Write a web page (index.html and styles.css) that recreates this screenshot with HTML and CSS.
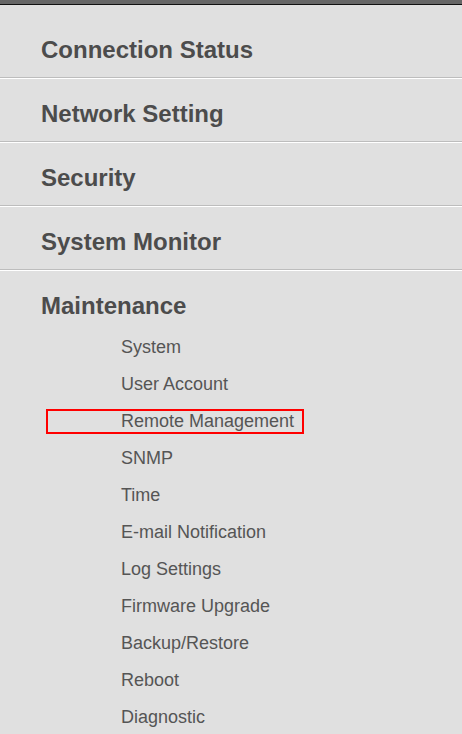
FILE: index.html
```html
<!DOCTYPE html>
<html lang="en">
<head>
  <meta charset="UTF-8" />
  <meta name="viewport" content="width=device-width, initial-scale=1.0"/>
  <title>Menu</title>
  <link rel="stylesheet" href="styles.css">
</head>
<body>

  <div class="topbar"></div>

  <ul class="menu">
    <li class="menu-item"><a class="menu-title" href="#">Connection Status</a></li>
    <li class="menu-item"><a class="menu-title" href="#">Network Setting</a></li>
    <li class="menu-item"><a class="menu-title" href="#">Security</a></li>
    <li class="menu-item"><a class="menu-title" href="#">System Monitor</a></li>
    <li class="menu-item open">
      <a class="menu-title" href="#">Maintenance</a>
      <ul class="submenu">
        <li><a href="#">System</a></li>
        <li><a href="#">User Account</a></li>
        <li><a class="selected" href="#">Remote Management</a></li>
        <li><a href="#">SNMP</a></li>
        <li><a href="#">Time</a></li>
        <li><a href="#">E-mail Notification</a></li>
        <li><a href="#">Log Settings</a></li>
        <li><a href="#">Firmware Upgrade</a></li>
        <li><a href="#">Backup/Restore</a></li>
        <li><a href="#">Reboot</a></li>
        <li><a href="#">Diagnostic</a></li>
      </ul>
    </li>
  </ul>

</body>
</html>
```

FILE: styles.css
```css
body {
  margin: 0;
  font-family: "Liberation Sans", Arial, sans-serif;
  background-color: #e0e0e0;
  overflow: hidden;
}

a {
  text-decoration: none;
}

.topbar {
  height: 4px;
  background: #666666;
  border-bottom: 1px solid #111111;
}

.menu {
  list-style: none;
  margin: 0;
  padding: 10px 0 0 0;
}

.menu-item {
  border-bottom: 1px solid #bdbdbd;
  box-shadow: 0 1px 0 #ffffff;
  margin-bottom: 1px;
}

.menu-item.open {
  border-bottom: none;
  box-shadow: none;
}

.menu-title {
  display: block;
  padding: 20px 0 12px 41px;
  font-size: 24px;
  line-height: 30px;
  font-weight: bold;
  color: #4c4c4c;
}

.open .menu-title {
  padding-bottom: 0;
}

.submenu {
  list-style: none;
  margin: 8px 0 0 0;
  padding: 0;
}

.submenu li {
  height: 37px;
  display: flex;
  align-items: center;
  padding-left: 121px;
}

.submenu a {
  font-size: 18px;
  color: #555555;
}

/* highlighted entry */
.submenu a.selected {
  margin-left: -75px;
  padding: 0 8px 0 73px;
  line-height: 21px;
  border: 2px solid #ff0000;
}
```
